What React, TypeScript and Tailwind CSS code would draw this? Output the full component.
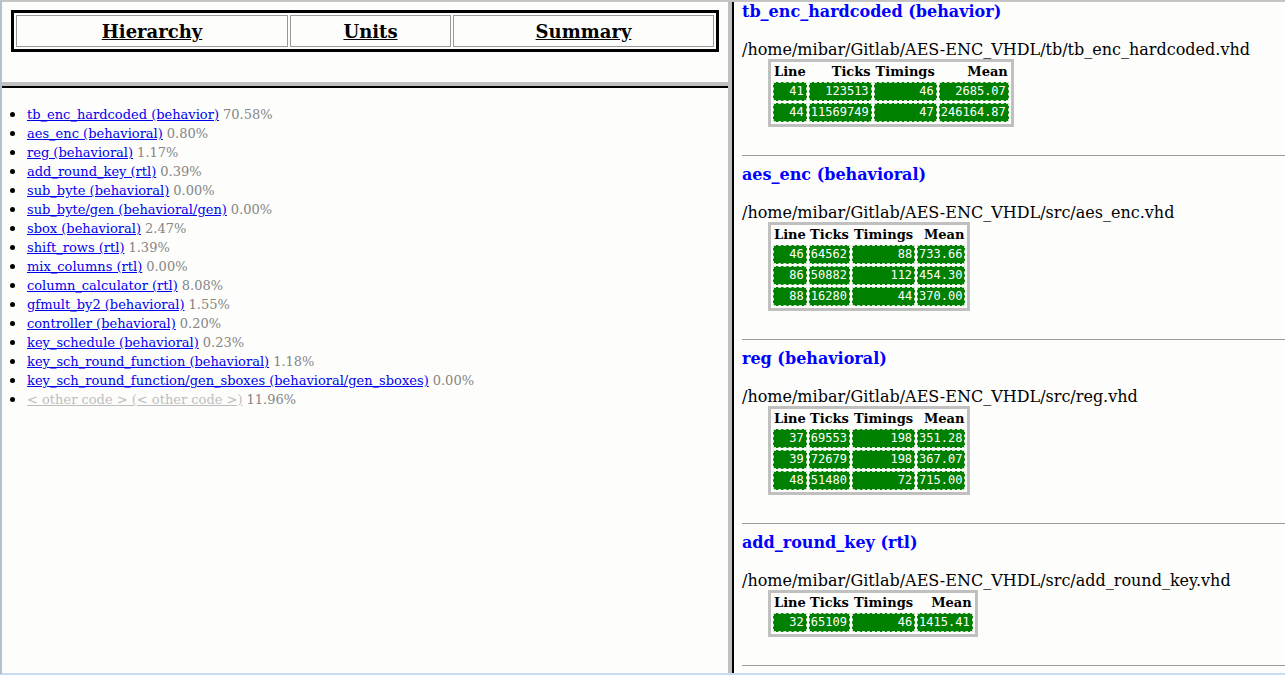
import React from "react";

const items: [string, string][] = [
  ["tb_enc_hardcoded (behavior)", "70.58%"],
  ["aes_enc (behavioral)", "0.80%"],
  ["reg (behavioral)", "1.17%"],
  ["add_round_key (rtl)", "0.39%"],
  ["sub_byte (behavioral)", "0.00%"],
  ["sub_byte/gen (behavioral/gen)", "0.00%"],
  ["sbox (behavioral)", "2.47%"],
  ["shift_rows (rtl)", "1.39%"],
  ["mix_columns (rtl)", "0.00%"],
  ["column_calculator (rtl)", "8.08%"],
  ["gfmult_by2 (behavioral)", "1.55%"],
  ["controller (behavioral)", "0.20%"],
  ["key_schedule (behavioral)", "0.23%"],
  ["key_sch_round_function (behavioral)", "1.18%"],
  ["key_sch_round_function/gen_sboxes (behavioral/gen_sboxes)", "0.00%"],
  ["< other code > (< other code >)", "11.96%"],
];

type Section = { title: string; path: string; rows: string[][] };

const sections: Section[] = [
  {
    title: "tb_enc_hardcoded (behavior)",
    path: "/home/mibar/Gitlab/AES-ENC_VHDL/tb/tb_enc_hardcoded.vhd",
    rows: [
      ["41", "123513", "46", "2685.07"],
      ["44", "11569749", "47", "246164.87"],
    ],
  },
  {
    title: "aes_enc (behavioral)",
    path: "/home/mibar/Gitlab/AES-ENC_VHDL/src/aes_enc.vhd",
    rows: [
      ["46", "64562", "88", "733.66"],
      ["86", "50882", "112", "454.30"],
      ["88", "16280", "44", "370.00"],
    ],
  },
  {
    title: "reg (behavioral)",
    path: "/home/mibar/Gitlab/AES-ENC_VHDL/src/reg.vhd",
    rows: [
      ["37", "69553", "198", "351.28"],
      ["39", "72679", "198", "367.07"],
      ["48", "51480", "72", "715.00"],
    ],
  },
  {
    title: "add_round_key (rtl)",
    path: "/home/mibar/Gitlab/AES-ENC_VHDL/src/add_round_key.vhd",
    rows: [["32", "65109", "46", "1415.41"]],
  },
];

const serif = "font-['DejaVu_Serif',serif]";
const mono = "font-['DejaVu_Sans_Mono',monospace]";

const headers: [string, string][] = [
  ["Line", "px-[1px]"],
  ["Ticks", "px-[1px]"],
  ["Timings", "px-[2px]"],
  ["Mean", "px-[1px]"],
];

function StatTable({ rows }: { rows: string[][] }) {
  return (
    <table className="ml-[26px] border-[3px] border-solid border-[#c0c0c0] border-separate border-spacing-[2px]">
      <thead>
        <tr>
          {headers.map(([h, p]) => (
            <th
              key={h}
              className={`${serif} h-[16px] text-[13px] leading-[16px] font-bold text-right ${p} py-0 text-black`}
            >
              {h}
            </th>
          ))}
        </tr>
      </thead>
      <tbody>
        {rows.map((r, i) => (
          <tr key={i}>
            {r.map((c, j) => (
              <td
                key={j}
                className={`${mono} h-[19px] text-[12px] leading-[15px] text-white text-right bg-[#008000] border border-dashed border-[#cfe3cf] pl-[1px] pr-[2px] py-0 whitespace-nowrap`}
              >
                {c}
              </td>
            ))}
          </tr>
        ))}
      </tbody>
    </table>
  );
}

export default function App() {
  return (
    <div className="w-[1285px] h-[675px] overflow-hidden bg-[#fdfdfb] flex flex-col border-t-2 border-t-[#c4c4c4] border-l-2 border-l-[#b4bfd2] border-b-2 border-b-[#c9dbf3]">
      <div className="flex flex-1 min-h-0">
        {/* left column */}
        <div className="w-[726px] flex flex-col">
          <div className="h-[80px] pt-[8px] pl-[9px]">
            <div className="w-[708px] border-[3px] border-black p-[2px] flex gap-[2px]">
              {[
                ["Hierarchy", "w-[272px]"],
                ["Units", "w-[161px]"],
                ["Summary", "flex-1"],
              ].map(([t, w]) => (
                <div
                  key={t}
                  className={`${w} h-[32px] pt-[2px] border border-[#9a9a9a] flex items-center justify-center`}
                >
                  <span className={`${serif} text-[18px] leading-[22px] font-bold underline text-black`}>{t}</span>
                </div>
              ))}
            </div>
          </div>
          <div className="h-[4px] bg-[#c0c0c0]" />
          <div className="h-[2px] bg-black" />
          <div className="flex-1 pt-[17px]">
            {items.map(([name, pct], i) => {
              const other = i === items.length - 1;
              return (
                <div key={i} className={`flex items-center h-[19px] ${serif} text-[13px] leading-[19px]`}>
                  <span className="ml-[8px] w-[5px] h-[5px] rounded-full bg-black" />
                  <span
                    className={`ml-[12px] underline ${other ? "text-[#bdbdbd]" : "text-[#0000ee]"}`}
                  >
                    {name}
                  </span>
                  <span className="ml-[4px] text-[#858585]">{pct}</span>
                </div>
              );
            })}
          </div>
        </div>
        {/* vertical frame border */}
        <div className="w-[4px] bg-[#c0c0c0]" />
        <div className="w-[2px] bg-black" />
        {/* right frame */}
        <div className="flex-1 overflow-hidden pl-[8px]">
          {sections.map((s, i) => (
            <div key={i}>
              <div
                className={`${serif} text-[16px] leading-[20px] font-bold text-[#0000ff] ${i === 0 ? "mt-0" : "mt-[9px]"}`}
              >
                {s.title}
              </div>
              <div className={`${serif} mt-[18px] text-[16px] leading-[19px] text-black whitespace-nowrap`}>
                {s.path}
              </div>
              <StatTable rows={s.rows} />
              <div className="mt-[28px] h-px bg-[#9c9c9c]" />
            </div>
          ))}
        </div>
      </div>
    </div>
  );
}
